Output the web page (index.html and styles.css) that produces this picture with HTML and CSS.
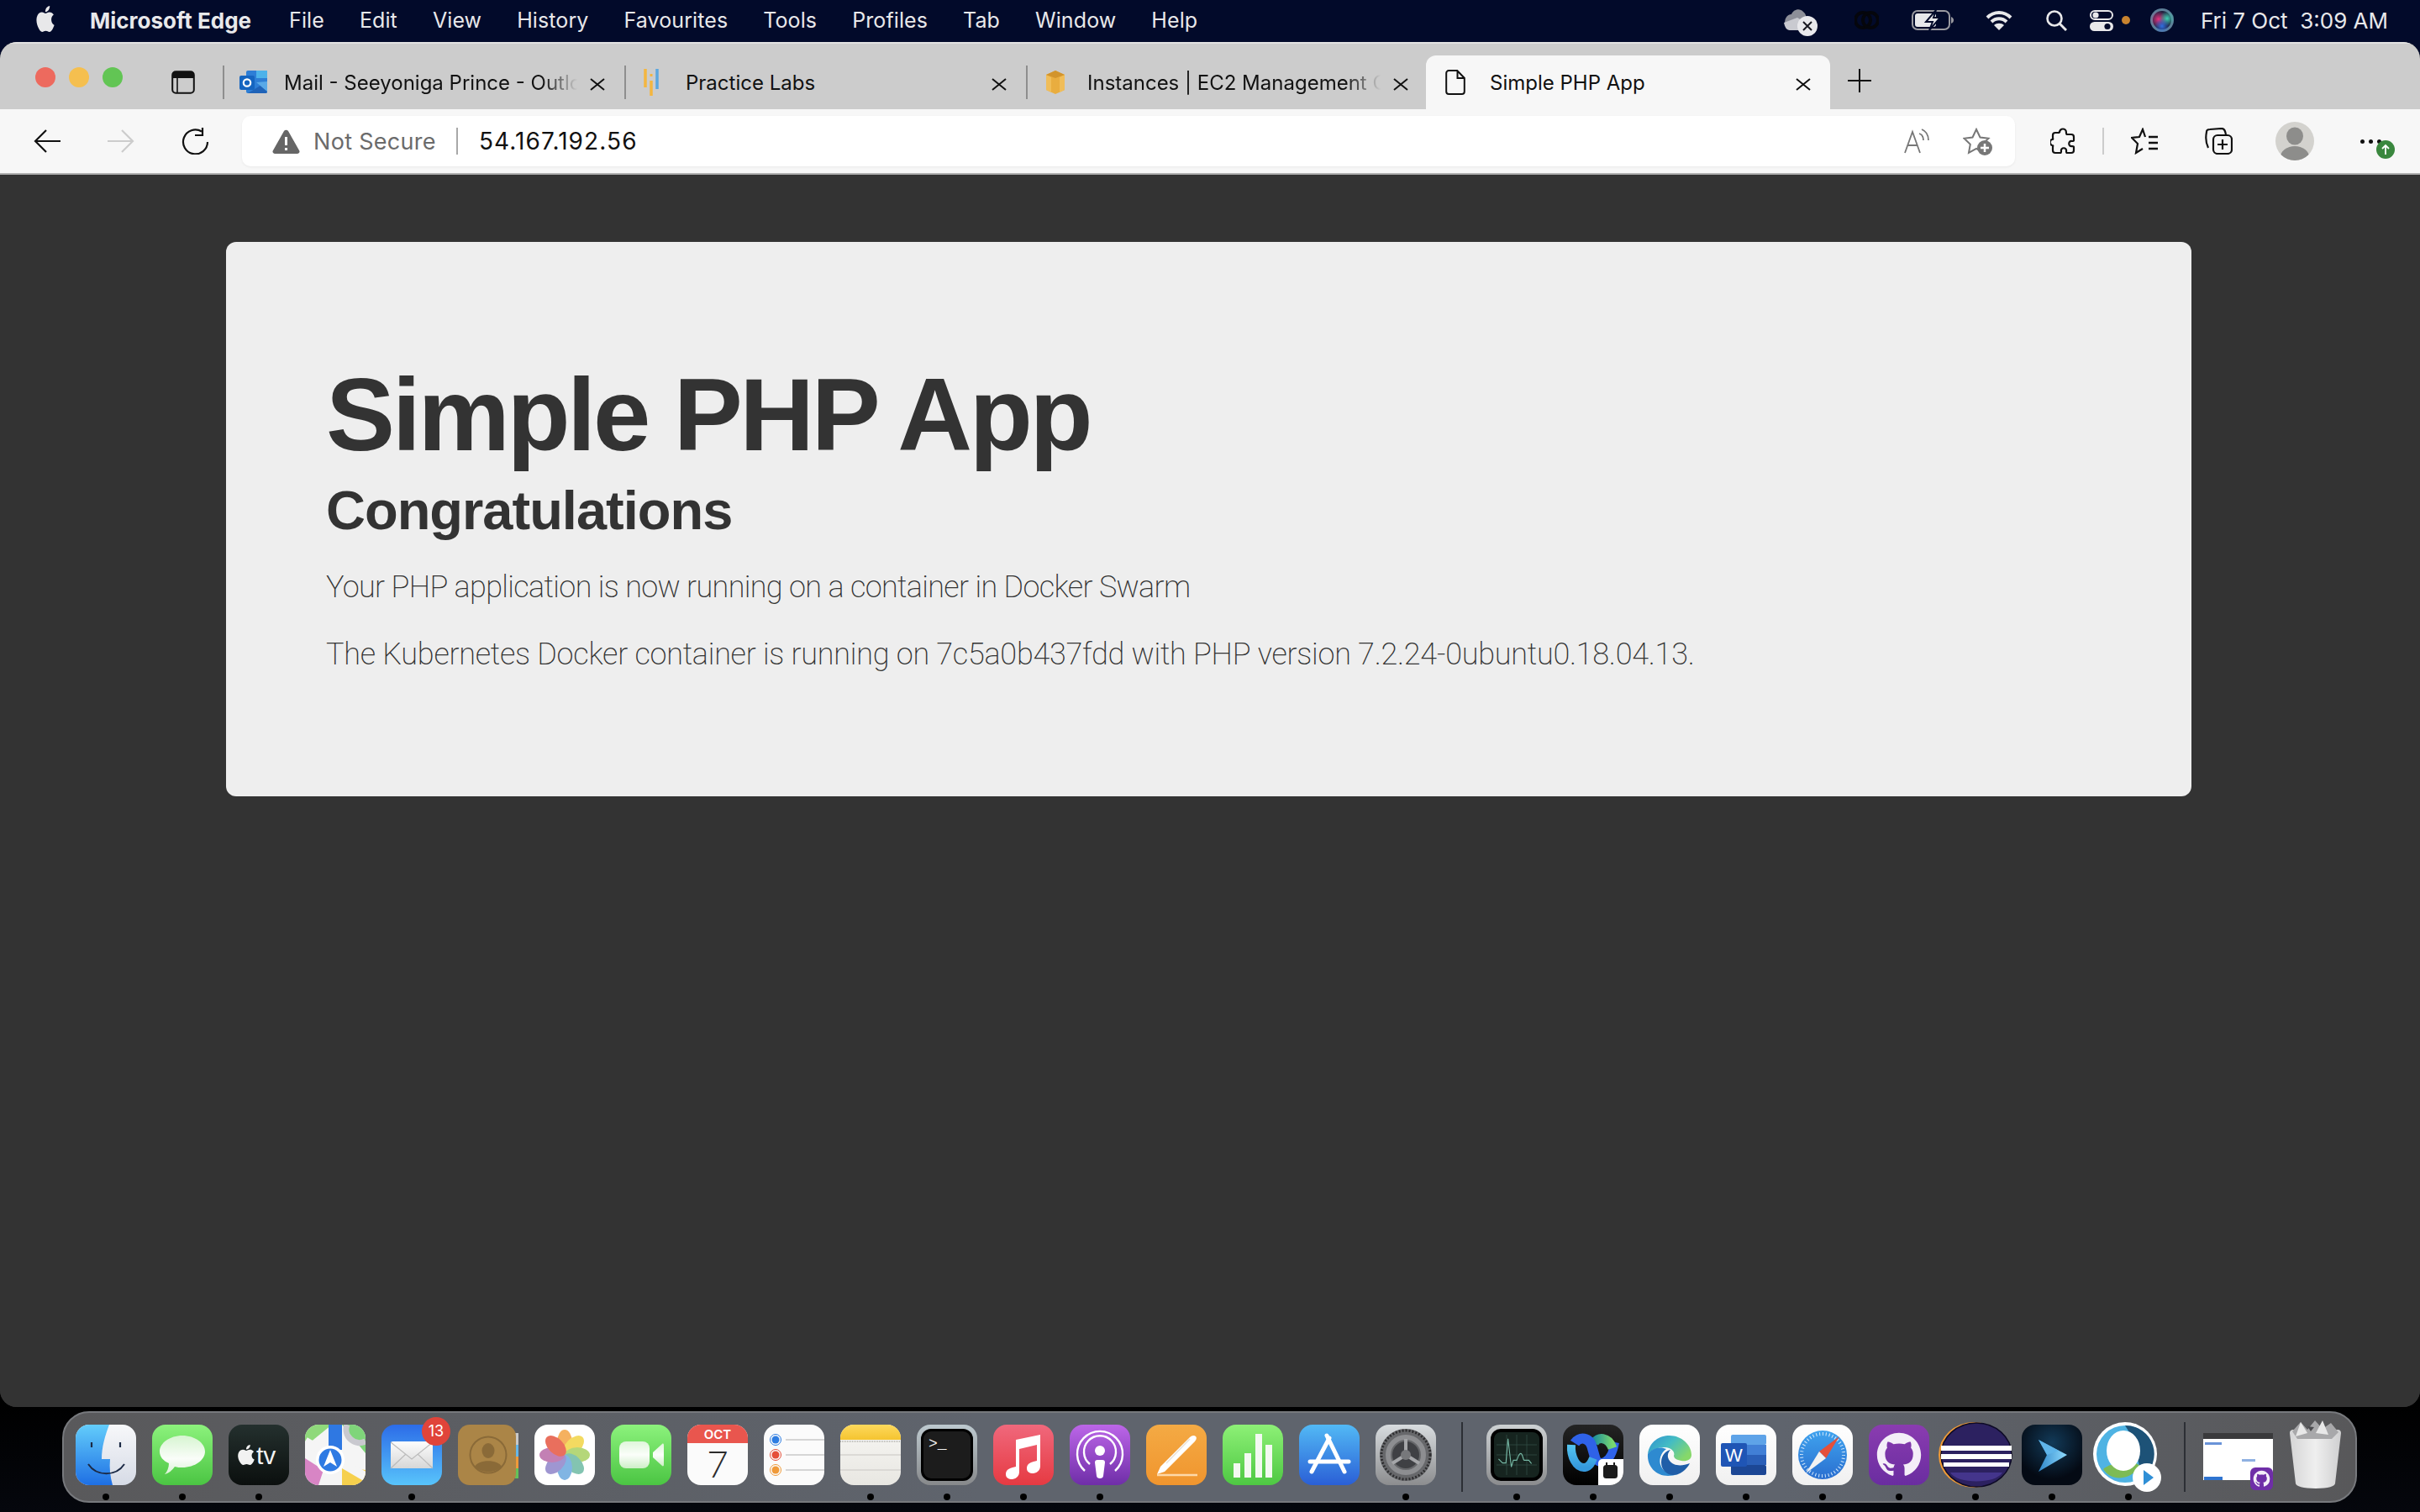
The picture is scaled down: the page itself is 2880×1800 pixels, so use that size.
FILE: index.html
```html
<!DOCTYPE html>
<html lang="en">
<head>
    <meta charset="UTF-8">
    <title>Simple PHP App</title>
    <link rel="stylesheet" href="styles.css">
</head>
<body>

    <!-- mac menu bar -->
    <div class="menubar">
        <svg class="apple" width="26" height="31" viewBox="0 0 24 24" preserveAspectRatio="none"><path fill="#e8e8ea" d="M12.152 6.896c-.948 0-2.415-1.078-3.96-1.04-2.04.027-3.91 1.183-4.961 3.014-2.117 3.675-.546 9.103 1.519 12.09 1.013 1.454 2.208 3.09 3.792 3.039 1.52-.065 2.09-.987 3.935-.987 1.831 0 2.35.987 3.96.948 1.637-.026 2.676-1.48 3.676-2.948 1.156-1.688 1.636-3.325 1.662-3.415-.039-.013-3.182-1.221-3.22-4.857-.026-3.04 2.48-4.494 2.597-4.559-1.429-2.09-3.623-2.324-4.39-2.376-2-.156-3.675 1.09-4.61 1.09zM15.53 3.83c.843-1.012 1.4-2.427 1.245-3.83-1.207.052-2.662.805-3.532 1.818-.78.896-1.454 2.338-1.273 3.714 1.338.104 2.715-.688 3.559-1.701"/></svg>
        <span class="menu-item app-name">Microsoft Edge</span>
        <span class="menu-item">File</span>
        <span class="menu-item">Edit</span>
        <span class="menu-item">View</span>
        <span class="menu-item">History</span>
        <span class="menu-item">Favourites</span>
        <span class="menu-item">Tools</span>
        <span class="menu-item">Profiles</span>
        <span class="menu-item">Tab</span>
        <span class="menu-item">Window</span>
        <span class="menu-item">Help</span>

        <div class="status">
            <svg class="st-cloud" width="41" height="34" viewBox="0 0 41 34"><path fill="#8d8f98" d="M3 22C0 14 5 8 10 8c2-6 10-8 14-3 4 3 4 8 3 12L8 27z"/><path fill="#c9cad0" d="M1 18l16-6 10 6-6 9H8C4 27 2 23 1 18z"/><circle cx="29" cy="22" r="12" fill="#e9e9ec"/><path d="M24 17l10 10M34 17L24 27" stroke="#1a1a22" stroke-width="2"/></svg>
            <svg class="st-dark" width="29" height="24" viewBox="0 0 29 24"><circle cx="10" cy="12" r="9" fill="none" stroke="#05060c" stroke-width="4"/><circle cx="19" cy="12" r="9" fill="none" stroke="#05060c" stroke-width="4"/></svg>
            <svg class="st-battery" width="51" height="24" viewBox="0 0 51 24"><rect x="1" y="1" width="44" height="22" rx="6" fill="none" stroke="#9a9aa0" stroke-width="2"/><rect x="4" y="4" width="25" height="16" rx="3" fill="#e8e8ea"/><path d="M47 8c2 1 3 2 3 4s-1 3-3 4z" fill="#9a9aa0"/><path d="M29 0L17 14h8l-4 10 13-15h-8z" fill="#e8e8ea" stroke="#020a2a" stroke-width="2"/></svg>
            <svg class="st-wifi" width="32" height="24" viewBox="0 0 32 24"><path d="M2 9c8-8 20-8 28 0M7 14c5-5 13-5 18 0M11 18" fill="none" stroke="#e8e8ea" stroke-width="4"/><path d="M16 24l-6-6c3-3 9-3 12 0z" fill="#e8e8ea"/></svg>
            <svg class="st-search" width="26" height="25" viewBox="0 0 26 25"><circle cx="11" cy="10" r="8.500" fill="none" stroke="#e8e8ea" stroke-width="2.600"/><path d="M17 16l8 8" stroke="#e8e8ea" stroke-width="3"/></svg>
            <svg class="st-control" width="28" height="25" viewBox="0 0 28 25"><rect x="1" y="1" width="26" height="10" rx="5" fill="none" stroke="#e8e8ea" stroke-width="2"/><circle cx="7" cy="6" r="3.600" fill="#e8e8ea"/><rect y="14" width="28" height="11" rx="5.500" fill="#e8e8ea"/><circle cx="21" cy="19.500" r="3.600" fill="#020a2a"/></svg>
            <span class="st-dot"></span>
            <svg class="st-siri" width="28" height="28" viewBox="0 0 28 28"><defs><radialGradient id="siriPink"><stop offset="0" stop-color="#e8337f"/><stop offset="1" stop-color="#e8337f" stop-opacity="0"/></radialGradient><radialGradient id="siriTeal"><stop offset="0" stop-color="#3fd0b4"/><stop offset="1" stop-color="#3fd0b4" stop-opacity="0"/></radialGradient><radialGradient id="siriBlue"><stop offset="0" stop-color="#2f6fe0"/><stop offset="1" stop-color="#2f6fe0" stop-opacity="0"/></radialGradient></defs><circle cx="14" cy="14" r="14" fill="#5d7f98"/><circle cx="14" cy="14" r="11" fill="#20203e"/><circle cx="10" cy="13" r="10" fill="url(#siriPink)"/><circle cx="20" cy="12" r="9" fill="url(#siriTeal)"/><circle cx="14" cy="21" r="9" fill="url(#siriBlue)"/></svg>
            <span class="clock">Fri 7 Oct&nbsp; 3:09 AM</span>
        </div>
    </div>

    <div class="window">
        <div class="tabstrip">
            <div class="lights">
                <span class="light red"></span>
                <span class="light yellow"></span>
                <span class="light green"></span>
            </div>
            <svg class="sidebar-toggle" width="28" height="28" viewBox="0 0 28 28"><rect x="1.200" y="1.200" width="25.600" height="25.600" rx="4" fill="none" stroke="#111" stroke-width="2"/><path d="M1 5a4 4 0 014-4h18a4 4 0 014 4v4H1z" fill="#111"/><path d="M7 9v18" stroke="#111" stroke-width="1.600"/></svg>

            <div class="tab">
                <span class="tab-icon">
                    <svg width="34" height="28" viewBox="0 0 34 28"><rect x="8" y="0" width="25" height="27" rx="2" fill="#2d7ed6"/><rect x="20" y="0" width="13" height="9" fill="#4cb2ea"/><path d="M10 27l23-14v12a2 2 0 01-2 2z" fill="#1f63b8"/><path d="M20 14l13-1v12z" fill="#58a9e8"/><rect x="0" y="6" width="18" height="17" rx="2" fill="#1565c0"/><circle cx="9" cy="14.500" r="4.200" fill="none" stroke="#fff" stroke-width="2.200"/></svg>
                </span>
                <span class="tab-title">Mail - Seeyoniga Prince - Outlo</span>
                <svg class="tab-close" width="20" height="15" viewBox="0 0 20 15"><path d="M2 1l16 13M18 1L2 14" stroke="#111" stroke-width="2"/></svg>
            </div>
            <div class="tab">
                <span class="tab-icon">
                    <svg width="34" height="32" viewBox="0 0 34 32"><path d="M5 0v22M12 14v18" stroke="#f4b63f" stroke-width="3.500"/><path d="M19 0v24" stroke="#5aa7e0" stroke-width="3.500"/><path d="M12 6v3" stroke="#f4b63f" stroke-width="3"/></svg>
                </span>
                <span class="tab-title plain">Practice Labs</span>
                <svg class="tab-close" width="20" height="15" viewBox="0 0 20 15"><path d="M2 1l16 13M18 1L2 14" stroke="#111" stroke-width="2"/></svg>
            </div>
            <div class="tab">
                <span class="tab-icon">
                    <svg width="34" height="28" viewBox="0 0 34 28"><path d="M4 5l11-5 11 5v18l-11 5-11-5z" fill="#e9ad3f"/><path d="M4 5l6 3v18l-6-3zM26 5l-6 3v18l6-3z" fill="#f0bd59"/><path d="M4 5l11-5 11 5-11 4z" fill="#d2942c"/></svg>
                </span>
                <span class="tab-title">Instances | EC2 Management C</span>
                <svg class="tab-close" width="20" height="15" viewBox="0 0 20 15"><path d="M2 1l16 13M18 1L2 14" stroke="#111" stroke-width="2"/></svg>
            </div>
            <div class="tab active">
                <span class="tab-icon">
                    <svg width="24" height="30" viewBox="0 0 24 30"><path d="M1.200 4a3 3 0 013-3h10l8.600 9v16a3 3 0 01-3 3H4.200a3 3 0 01-3-3zM14.500 1v9h8" fill="none" stroke="#111" stroke-width="2"/></svg>
                </span>
                <span class="tab-title plain">Simple PHP App</span>
                <svg class="tab-close" width="20" height="15" viewBox="0 0 20 15"><path d="M2 1l16 13M18 1L2 14" stroke="#111" stroke-width="2"/></svg>
            </div>
            <svg class="new-tab" width="28" height="28" viewBox="0 0 28 28"><path d="M14 0v28M0 14h28" stroke="#111" stroke-width="2"/></svg>
        </div>

        <div class="toolbar">
            <svg class="nav-btn" width="32" height="28" viewBox="0 0 32 28"><path d="M32 14H2M15 1L2 14l13 13" fill="none" stroke="#111" stroke-width="2.200"/></svg>
            <svg class="nav-btn" width="32" height="28" viewBox="0 0 32 28"><path d="M0 14h30M17 1l13 13-13 13" fill="none" stroke="#ccc" stroke-width="2.200"/></svg>
            <svg class="nav-btn" width="33" height="32" viewBox="0 0 33 32"><path d="M24 4.500A14.500 14.500 0 1031 17" fill="none" stroke="#111" stroke-width="2.200"/><path d="M25 0v9h-9" fill="none" stroke="#111" stroke-width="2.200"/></svg>

            <div class="address">
                <svg width="33" height="29" viewBox="0 0 33 29"><path d="M14 2a3 3 0 015 0l13 23a2.500 2.500 0 01-2 4H3a2.500 2.500 0 01-2-4z" fill="#666"/><path d="M16.500 9v10M16.500 22v3" stroke="#fff" stroke-width="3"/></svg>
                <span class="not-secure">Not Secure</span>
                <span class="address-sep"></span>
                <span class="url">54.167.192.56</span>
                <div class="address-actions">
                    <svg width="31" height="30" viewBox="0 0 31 30"><path d="M1 29L10 4l9 25M4 20h12" fill="none" stroke="#777" stroke-width="1.800"/><path d="M18 6c3 1 5 4 5 8M21 1c5 2 8 7 8 13" fill="none" stroke="#777" stroke-width="1.800"/></svg>
                    <svg width="35" height="33" viewBox="0 0 35 33"><path d="M16 2l4.500 9.500 10 1.300-7.300 7 1.800 10-9-5-9 5 1.800-10-7.300-7 10-1.300z" fill="none" stroke="#777" stroke-width="2"/><circle cx="26" cy="24" r="9" fill="#777"/><path d="M26 19v10M21 24h10" stroke="#fff" stroke-width="2.500"/></svg>
                </div>
            </div>

            <span class="tool-btn">
                <svg width="30" height="32" viewBox="0 0 30 32"><path d="M11 6c0-6 8-6 8 0 0 1 0 2 1 2h5c2 0 3 1 3 3v4c0 1-1 1-2 1-5-1-5 7 0 6 1 0 2 0 2 1v4c0 2-1 3-3 3h-5c-1 0-1-1-1-2 1-5-7-5-6 0 0 1 0 2-1 2H6c-2 0-3-1-3-3v-4c0-1 1-2-1-2-3-1-3-6 0-7 2 0 1-1 1-2v-3c0-2 1-3 3-3h4c1 0 1-1 1-2z" fill="none" stroke="#111" stroke-width="2.200"/></svg>
            </span>
            <span class="tool-sep"></span>
            <span class="tool-btn">
                <svg width="33" height="32" viewBox="0 0 33 32"><path d="M17 11l-3-9-4 9-9 1 7 7-2 11 8-5M9 19" fill="none" stroke="#111" stroke-width="2.200"/><path d="M21 11h11M21 18h11M21 25h11" stroke="#111" stroke-width="2.400"/></svg>
            </span>
            <span class="tool-btn">
                <svg width="33" height="32" viewBox="0 0 33 32"><path d="M4 24C1 18 1 10 2 5c0-2 2-3 4-3l14-1c3 0 4 2 5 7" fill="none" stroke="#111" stroke-width="2.200"/><rect x="10" y="9" width="22" height="22" rx="5" fill="#f7f7f7" stroke="#111" stroke-width="2.200"/><path d="M21 14v12M15 20h12" stroke="#111" stroke-width="2.200"/></svg>
            </span>
            <span class="tool-btn avatar-btn">
                <svg width="46" height="46" viewBox="0 0 46 46"><defs><clipPath id="avatarClip"><circle cx="23" cy="23" r="23"/></clipPath></defs><circle cx="23" cy="23" r="23" fill="#d3d2ce"/><g clip-path="url(#avatarClip)" fill="#8d8d8b"><ellipse cx="23" cy="17" rx="10" ry="10.500"/><ellipse cx="23" cy="42" rx="17" ry="13"/></g></svg>
            </span>
            <span class="more-btn">
                <span class="more-dots"></span>
                <svg class="update-badge" width="22" height="22" viewBox="0 0 22 22"><circle cx="11" cy="11" r="11" fill="#3a873e"/><path d="M11 17V6M7 10l4-4 4 4" fill="none" stroke="#fff" stroke-width="1.800"/></svg>
            </span>
        </div>

        <div class="page">
            <div class="jumbotron">
                <h1>Simple PHP App</h1>
                <h2>Congratulations</h2>
                <p class="lead-one">Your PHP application is now running on a container in Docker Swarm</p>
                <p class="lead-two">The Kubernetes Docker container is running on 7c5a0b437fdd with PHP version 7.2.24-0ubuntu0.18.04.13.</p>
            </div>
        </div>
    </div>

    <!-- dock -->
    <div class="dock">
        <div class="dock-item run"><div class="app-icon finder">
            <svg viewBox="0 0 72 72"><defs><linearGradient id="finderG" x1="0" y1="0" x2="0" y2="1"><stop offset="0" stop-color="#63cdfb"/><stop offset="1" stop-color="#1e6fe4"/></linearGradient></defs><path d="M0 0h40c-5 13-9 27-9 41h10c-1 10 0 21 3 31H0z" fill="url(#finderG)"/><path d="M19 21v6M53 21v6" stroke="#1c2a45" stroke-width="2.200"/><path d="M15 47c10 15 33 15 43 0" fill="none" stroke="#1c2a45" stroke-width="2"/></svg>
        </div></div>
        <div class="dock-item run"><div class="app-icon messages">
            <svg viewBox="0 0 72 72"><defs><linearGradient id="msgG" x1="0" y1="0" x2="0" y2="1"><stop offset="0" stop-color="#d6f5d0"/><stop offset=".6" stop-color="#fafdf9"/><stop offset="1" stop-color="#d9f3d4"/></linearGradient></defs><path d="M36 13c15 0 27 9 27 19s-12 19-27 19c-3 0-6 0-9-1-3 4-7 8-12 9 3-3 5-8 5-13-7-3-11-8-11-14 0-10 12-19 27-19z" fill="url(#msgG)"/></svg>
        </div></div>
        <div class="dock-item run"><div class="app-icon appletv">
            <svg viewBox="0 0 72 72"><g transform="translate(9 24)"><path fill="#f2f2f2" d="M12.152 6.896c-.948 0-2.415-1.078-3.96-1.04-2.04.027-3.91 1.183-4.961 3.014-2.117 3.675-.546 9.103 1.519 12.09 1.013 1.454 2.208 3.09 3.792 3.039 1.52-.065 2.09-.987 3.935-.987 1.831 0 2.35.987 3.96.948 1.637-.026 2.676-1.48 3.676-2.948 1.156-1.688 1.636-3.325 1.662-3.415-.039-.013-3.182-1.221-3.22-4.857-.026-3.04 2.48-4.494 2.597-4.559-1.429-2.09-3.623-2.324-4.39-2.376-2-.156-3.675 1.09-4.61 1.09zM15.53 3.83c.843-1.012 1.4-2.427 1.245-3.83-1.207.052-2.662.805-3.532 1.818-.78.896-1.454 2.338-1.273 3.714 1.338.104 2.715-.688 3.559-1.701"/></g><text x="33" y="47" class="tv-text">tv</text></svg>
        </div></div>
        <div class="dock-item"><div class="app-icon maps">
            <svg viewBox="0 0 72 72"><path d="M0 0h32L0 26z" fill="#8fd97b"/><path d="M44 0h28v34z" fill="#7fd57a"/><path d="M50 0a16 16 0 0022 20" fill="none" stroke="#c9c9cf" stroke-width="7"/><path d="M0 40l22 14-6 18H0z" fill="#d885c5"/><path d="M44 50l28 4v18H38z" fill="#f6d04d"/><path d="M0 20l72 42" stroke="#f5f5f5" stroke-width="11"/><path d="M28 0h16v30H28z" fill="#2f78e2"/><path d="M28 52h16v20H28z" fill="#f5f5f5"/><circle cx="30" cy="42" r="17" fill="#fff"/><circle cx="30" cy="42" r="13.500" fill="#2e7ae3"/><path d="M30 30l8 20-8-5-8 5z" fill="#fff"/></svg>
        </div></div>
        <div class="dock-item run"><div class="app-icon mail">
            <svg viewBox="0 0 72 72"><defs><linearGradient id="mailG" x1="0" y1="0" x2="0" y2="1"><stop offset="0" stop-color="#fdfdfd"/><stop offset="1" stop-color="#d7d7d7"/></linearGradient></defs><rect x="11" y="20" width="50" height="32" rx="2.500" fill="url(#mailG)"/><path d="M11 21l25 20 25-20M11 52l18-17M61 52L43 35" fill="none" stroke="#bbb" stroke-width="1.200"/></svg>
            <span class="badge">13</span>
        </div></div>
        <div class="dock-item"><div class="app-icon contacts">
            <svg viewBox="0 0 72 72"><rect x="68" y="10" width="6" height="14" fill="#c9c9c9"/><rect x="68" y="24" width="6" height="14" fill="#65b7e8"/><rect x="68" y="38" width="6" height="14" fill="#ef9a3a"/><rect x="68" y="52" width="6" height="12" fill="#63c25a"/><rect x="0" y="0" width="69" height="72" rx="14" fill="#ab8547"/><circle cx="36" cy="36" r="21.500" fill="none" stroke="#8a6a38" stroke-width="2"/><ellipse cx="36" cy="31" rx="7.500" ry="9" fill="#8a6a38"/><path d="M20 50c4-9 28-9 32 0-8 8-24 8-32 0z" fill="#8a6a38"/></svg>
        </div></div>
        <div class="dock-item"><div class="app-icon photos">
            <svg viewBox="0 0 72 72"><g opacity=".82"><ellipse cx="36" cy="21" rx="9" ry="15" fill="#f4a13c"/><ellipse cx="36" cy="21" rx="9" ry="15" fill="#f1d33f" transform="rotate(45 36 36)"/><ellipse cx="36" cy="21" rx="9" ry="15" fill="#a5cf5c" transform="rotate(90 36 36)"/><ellipse cx="36" cy="21" rx="9" ry="15" fill="#68b8a0" transform="rotate(135 36 36)"/><ellipse cx="36" cy="21" rx="9" ry="15" fill="#66a6dd" transform="rotate(180 36 36)"/><ellipse cx="36" cy="21" rx="9" ry="15" fill="#8a80c8" transform="rotate(225 36 36)"/><ellipse cx="36" cy="21" rx="9" ry="15" fill="#b765a4" transform="rotate(270 36 36)"/><ellipse cx="36" cy="21" rx="9" ry="15" fill="#e5503a" transform="rotate(315 36 36)"/></g></svg>
        </div></div>
        <div class="dock-item"><div class="app-icon facetime">
            <svg viewBox="0 0 72 72"><defs><linearGradient id="ftG" x1="0" y1="0" x2="0" y2="1"><stop offset="0" stop-color="#dff6da"/><stop offset=".5" stop-color="#fbfefa"/><stop offset="1" stop-color="#cdeec7"/></linearGradient></defs><rect x="10" y="20" width="36" height="32" rx="8" fill="url(#ftG)"/><path d="M50 33l11-10c1-1 2 0 2 1v24c0 1-1 2-2 1L50 39z" fill="url(#ftG)"/></svg>
        </div></div>
        <div class="dock-item"><div class="app-icon calendar">
            <div class="cal-head">OCT</div>
            <div class="cal-day">7</div>
        </div></div>
        <div class="dock-item"><div class="app-icon reminders">
            <svg viewBox="0 0 72 72"><circle cx="14" cy="18" r="6.500" fill="none" stroke="#2f7de1"/><circle cx="14" cy="18" r="4.500" fill="#2f7de1"/><circle cx="14" cy="36" r="6.500" fill="none" stroke="#e5503a"/><circle cx="14" cy="36" r="4.500" fill="#e5503a"/><circle cx="14" cy="54" r="6.500" fill="none" stroke="#ef9a3a"/><circle cx="14" cy="54" r="4.500" fill="#ef9a3a"/><path d="M26 18h46M26 36h46M26 54h46" stroke="#c9c9c9" stroke-width="1.400"/></svg>
        </div></div>
        <div class="dock-item run"><div class="app-icon notes">
            <svg viewBox="0 0 72 72"><defs><linearGradient id="notesG" x1="0" y1="0" x2="0" y2="1"><stop offset="0" stop-color="#fdd95c"/><stop offset="1" stop-color="#f5c430"/></linearGradient></defs><rect width="72" height="18" fill="url(#notesG)"/><path d="M0 20h72" stroke="#bdbdb8" stroke-width="2" stroke-dasharray="1 1"/><path d="M0 36h72M0 54h72" stroke="#d5d4cf" stroke-width="1.400"/></svg>
        </div></div>
        <div class="dock-item run"><div class="app-icon terminal">
            <div class="term-screen">&gt;_</div>
        </div></div>
        <div class="dock-item run"><div class="app-icon music">
            <svg viewBox="0 0 72 72"><path d="M27 18l29-6v37c0 5-3 8-8 9-5 0-8-2-8-6 0-5 4-7 8-8l4-1V24l-21 5v27c0 5-3 8-8 9-5 0-8-2-8-6 0-5 4-7 8-8l4-1z" fill="#fff"/></svg>
        </div></div>
        <div class="dock-item run"><div class="app-icon podcasts">
            <svg viewBox="0 0 72 72"><g fill="none" stroke="#fff" stroke-width="2.400"><path d="M18 55a27 27 0 1136 0"/><path d="M24 47a19 19 0 1124 0"/></g><circle cx="36" cy="31" r="6" fill="#fff"/><path d="M33 42h6c2 0 3 1 3 3l-2 16c0 2-2 3-4 3s-4-1-4-3l-2-16c0-2 1-3 3-3z" fill="#fff"/></svg>
        </div></div>
        <div class="dock-item"><div class="app-icon pages">
            <svg viewBox="0 0 72 72"><path d="M13 59l4-9 35-35c2-2 5-3 7-1s0 5-2 7L22 56z" fill="#fff"/><path d="M24 46l28-29" stroke="#e9e3da" stroke-width="1.600"/><path d="M13 60h48" stroke="#fdd8a8" stroke-width="2.500"/></svg>
        </div></div>
        <div class="dock-item"><div class="app-icon numbers">
            <svg viewBox="0 0 72 72"><g fill="#f3f9f1"><rect x="13" y="46" width="8" height="17"/><rect x="26" y="34" width="8" height="29"/><rect x="39" y="11" width="8" height="52"/><rect x="51" y="24" width="8" height="39"/></g></svg>
        </div></div>
        <div class="dock-item"><div class="app-icon appstore">
            <svg viewBox="0 0 72 72"><g fill="none" stroke="#fff" stroke-width="5" stroke-linecap="round"><path d="M15 56l21-40"/><path d="M33 13l21 43"/><path d="M13 44h46"/></g></svg>
        </div></div>
        <div class="dock-item run"><div class="app-icon settings">
            <svg viewBox="0 0 72 72"><circle cx="36" cy="36" r="31" fill="#67686b"/><circle cx="36" cy="36" r="29" fill="none" stroke="#2d2d2f" stroke-width="3" stroke-dasharray="2 2"/><circle cx="36" cy="36" r="21" fill="none" stroke="#8d8e91" stroke-width="6"/><circle cx="36" cy="36" r="16" fill="#3f4044"/><g stroke="#a5a6a9" stroke-width="4"><path d="M36 36V17"/><path d="M36 36l16 10"/><path d="M36 36l-16 10"/></g><circle cx="36" cy="36" r="6" fill="#77787b"/></svg>
        </div></div>

        <span class="dock-divider"></span>

        <div class="dock-item run"><div class="app-icon activity">
            <div class="activity-screen">
                <svg viewBox="0 0 60 60"><path d="M0 15h60M0 30h60M0 45h60M15 0v60M30 0v60M45 0v60" stroke="#35574d" stroke-width=".8"/><path d="M3 36l6 6h5l3-36 5 42 3-10h5c2-4 3-10 6-10s3 8 5 10h7l4 5" fill="none" stroke="#76b9a5" stroke-width="1.400"/></svg>
            </div>
        </div></div>
        <div class="dock-item run"><div class="app-icon webex">
            <svg viewBox="0 0 72 72"><defs><linearGradient id="wbLight" x1="0" y1="0" x2="0" y2="1"><stop offset="0" stop-color="#55c6f0"/><stop offset="1" stop-color="#3599dd"/></linearGradient><linearGradient id="wbGreen" x1="0" y1="0" x2="1" y2="0"><stop offset="0" stop-color="#1f8f9a"/><stop offset="1" stop-color="#78d86f"/></linearGradient></defs><path d="M39 41c4 7 18 7 23-20" fill="none" stroke="#2f62e8" stroke-width="10"/><path d="M37 22c4-8 17-8 22 6" fill="none" stroke="url(#wbGreen)" stroke-width="11"/><path d="M14 22c5-8 18-8 21 6l4 14" fill="none" stroke="#2f62e8" stroke-width="12"/><path d="M10 24c-1 14 6 28 16 27 6-1 8-6 10-11" fill="none" stroke="url(#wbLight)" stroke-width="10"/><path d="M42 46a5 5 0 015-5h25v31H42z" fill="#fff"/><rect x="48" y="48" width="17" height="16" rx="3.500" fill="#1c1c1c"/><path d="M52 45v4M61 45v4" stroke="#1c1c1c" stroke-width="2"/></svg>
        </div></div>
        <div class="dock-item run"><div class="app-icon edge">
            <svg viewBox="0 0 72 72"><defs><linearGradient id="edgeG" x1="0" y1="0" x2="1" y2=".6"><stop offset="0" stop-color="#2f8fd0"/><stop offset=".5" stop-color="#43bcc4"/><stop offset="1" stop-color="#86d86a"/></linearGradient></defs><path d="M10 35C12 20 24 13 36 13c14 0 26 11 26 23 0 6-6 8-12 7-6-1-9-3-9-6 2-4-3-10-11-10-8 0-16 3-20 8z" fill="url(#edgeG)"/><path d="M10 35c4-6 14-10 22-6-6 4-10 13-6 21 3 6 10 10 20 9-4 1-8 2-12 2C20 61 9 50 10 35z" fill="#2e8ad0"/><path d="M26 45c0-9 6-14 11-15-4 4-4 9-1 13 4 6 14 7 24 3-4 8-12 14-20 14-8 0-14-7-14-15z" fill="#1f5ea8"/></svg>
        </div></div>
        <div class="dock-item run"><div class="app-icon word">
            <svg viewBox="0 0 72 72"><rect x="18" y="12" width="42" height="12" rx="2" fill="#5ea3e8"/><rect x="18" y="24" width="42" height="12" fill="#417fd6"/><rect x="18" y="36" width="42" height="12" fill="#2a5fb8"/><rect x="18" y="48" width="42" height="12" rx="2" fill="#1c4795"/><rect x="6" y="22" width="31" height="28" rx="2" fill="#1f55b5"/><text x="21.500" y="44" class="word-text">W</text></svg>
        </div></div>
        <div class="dock-item run"><div class="app-icon safari">
            <svg viewBox="0 0 72 72"><defs><linearGradient id="safariG" x1="0" y1="0" x2="0" y2="1"><stop offset="0" stop-color="#3fa3ee"/><stop offset="1" stop-color="#2a6fd0"/></linearGradient></defs><circle cx="36" cy="36" r="29" fill="url(#safariG)"/><circle cx="36" cy="36" r="25" fill="none" stroke="#d4e8fa" stroke-width="4" stroke-dasharray="1 2.900"/><path d="M56 14L32 32l8 8z" fill="#e5503a"/><path d="M16 58l24-18-8-8z" fill="#f2f2f2"/></svg>
        </div></div>
        <div class="dock-item run"><div class="app-icon github">
            <svg viewBox="-3 -3 22 22"><path fill="#f4eef8" d="M8 0C3.58 0 0 3.58 0 8c0 3.54 2.29 6.53 5.47 7.59.4.07.55-.17.55-.38 0-.19-.01-.82-.01-1.49-2.01.37-2.53-.49-2.69-.94-.09-.23-.48-.94-.82-1.13-.28-.15-.68-.52-.01-.53.63-.01 1.08.58 1.23.82.72 1.21 1.87.87 2.33.66.07-.52.28-.87.51-1.07-1.78-.2-3.64-.89-3.64-3.95 0-.87.31-1.59.82-2.15-.08-.2-.36-1.02.08-2.12 0 0 .67-.21 2.2.82.64-.18 1.32-.27 2-.27.68 0 1.36.09 2 .27 1.53-1.04 2.2-.82 2.2-.82.44 1.1.16 1.92.08 2.12.51.56.82 1.27.82 2.15 0 3.07-1.87 3.75-3.65 3.95.29.25.54.73.54 1.48 0 1.07-.01 1.93-.01 2.2 0 .21.15.46.55.38A8.013 8.013 0 0016 8c0-4.42-3.58-8-8-8z"/></svg>
        </div></div>
        <div class="dock-item run"><div class="app-icon eclipse">
            <svg viewBox="0 0 88 78"><ellipse cx="42" cy="39" rx="42" ry="39" fill="#f09a36"/><ellipse cx="45" cy="39" rx="42" ry="38" fill="#2c2160" stroke="#0d0a26" stroke-width="1.500"/><path d="M14 60c8 14 54 14 62 0z" fill="#44358c"/><rect x="3" y="28" width="84" height="6" fill="#fff"/><rect x="3" y="38" width="84" height="6" fill="#fff"/><rect x="6" y="48" width="78" height="5" fill="#fff"/></svg>
        </div></div>
        <div class="dock-item run"><div class="app-icon prompt">
            <svg viewBox="0 0 72 72"><defs><linearGradient id="promptG" x1="0" y1="0" x2="1" y2="0"><stop offset="0" stop-color="#2f86c8"/><stop offset="1" stop-color="#8fdcff"/></linearGradient></defs><path d="M20 18l34 18-34 20 10-20z" fill="url(#promptG)"/><path d="M20 18l24 13-14 5z" fill="#5fb5ea"/></svg>
        </div></div>
        <div class="dock-item run"><div class="app-icon webex-meet">
            <svg viewBox="0 0 82 84"><ellipse cx="38" cy="38" rx="38" ry="38" fill="#fff"/><ellipse cx="38" cy="38" rx="34" ry="34" fill="#4fb3e3"/><path d="M38 4a34 34 0 0120 62L48 20z" fill="#1d5277"/><path d="M12 56c8-8 34-12 44-4-8 14-32 22-44 4z" fill="#7dbb54"/><ellipse cx="36" cy="34" rx="20" ry="24" fill="#fff"/><circle cx="64" cy="66" r="17" fill="#fff"/><path d="M60 57l12 9-12 9z" fill="#2f8fd6"/></svg>
        </div></div>

        <span class="dock-divider thumb-divider"></span>

        <div class="dock-item thumb-item">
            <div class="thumb">
                <div class="thumb-bar"></div>
                <div class="thumb-note"></div>
                <div class="thumb-btn"></div>
            </div>
            <svg class="thumb-app" viewBox="-3 -3 22 22"><path fill="#f4eef8" d="M8 0C3.58 0 0 3.58 0 8c0 3.54 2.29 6.53 5.47 7.59.4.07.55-.17.55-.38 0-.19-.01-.82-.01-1.49-2.01.37-2.53-.49-2.69-.94-.09-.23-.48-.94-.82-1.13-.28-.15-.68-.52-.01-.53.63-.01 1.08.58 1.23.82.72 1.21 1.87.87 2.33.66.07-.52.28-.87.51-1.07-1.78-.2-3.64-.89-3.64-3.95 0-.87.31-1.59.82-2.15-.08-.2-.36-1.02.08-2.12 0 0 .67-.21 2.2.82.64-.18 1.32-.27 2-.27.68 0 1.36.09 2 .27 1.53-1.04 2.2-.82 2.2-.82.44 1.1.16 1.92.08 2.12.51.56.82 1.27.82 2.15 0 3.07-1.87 3.75-3.65 3.95.29.25.54.73.54 1.48 0 1.07-.01 1.93-.01 2.2 0 .21.15.46.55.38A8.013 8.013 0 0016 8c0-4.42-3.58-8-8-8z"/></svg>
        </div>
        <div class="dock-item trash-item">
            <svg viewBox="0 0 63 82"><defs><linearGradient id="trashG" x1="0" y1="0" x2="1" y2="0"><stop offset="0" stop-color="#d5d5d6"/><stop offset=".5" stop-color="#efefef"/><stop offset="1" stop-color="#cfcfd0"/></linearGradient></defs><path d="M1 16c0-3 2-4 4-4h53c3 0 4 2 4 4l-7 60c0 3-8 6-23 6s-24-3-24-6z" fill="url(#trashG)"/><path d="M4 14L14 3l8 9 9-11 9 10 10-7 9 11-8 8H10z" fill="#a8a8aa"/><path d="M14 3l8 13-14 4zM40 1l-8 15 15 2z" fill="#e8e8e8"/><path d="M22 8l4 6 4-5z" fill="#4b4b4f"/></svg>
        </div>
    </div>

</body>
</html>
```

FILE: styles.css
```css
* {
    box-sizing: border-box;
}
html, body {
    height: 100%;
}
body {
    margin: 0;
    width: 2880px;
    height: 1800px;
    overflow: hidden;
    display: flex;
    flex-direction: column;
    font-family: Inter, "Liberation Sans", sans-serif;
    background: linear-gradient(#020a2a 0, #020a2a 90px, #000 1670px, #05070d 1800px);
}

/* menu bar */
.menubar {
    height: 50px;
    flex: none;
    display: flex;
    align-items: center;
    padding: 0 0 2px 41px;
    color: #e8e8ea;
    font-size: 25px;
}
.apple {
    margin-right: 40px;
    margin-top: -4px;
}
.menu-item {
    margin-right: 42px;
    letter-spacing: 0.1px;
}
.app-name {
    margin-right: 45px;
    font-size: 26px;
    font-weight: 700;
    letter-spacing: 0;
}
.status {
    margin-left: auto;
    display: flex;
    align-items: center;
    padding-right: 38px;
}
.st-cloud {
    margin-top: 4px;
}
.st-dark {
    margin-left: 44px;
}
.st-battery {
    margin-left: 39px;
}
.st-wifi {
    margin-left: 37px;
}
.st-search {
    margin-left: 39px;
}
.st-control {
    margin-left: 27px;
}
.st-dot {
    width: 10px;
    height: 10px;
    margin-left: 10px;
    border-radius: 50%;
    background: #c8832f;
}
.st-siri {
    margin-left: 24px;
}
.clock {
    margin-left: 32px;
    font-size: 26px;
}

/* browser window */
.window {
    flex: none;
    height: 1625px;
    display: flex;
    flex-direction: column;
    border-radius: 20px;
    overflow: hidden;
    background: #333;
}
.tabstrip {
    height: 80px;
    flex: none;
    display: flex;
    align-items: flex-end;
    padding-left: 42px;
    background: #ccc;
    border-top: 2px solid #e2e2e2;
    font-size: 24px;
    color: #111;
}
.lights {
    display: flex;
    gap: 16px;
    align-self: center;
    margin-top: 2px;
}
.light {
    width: 24px;
    height: 24px;
    border-radius: 50%;
}
.red {
    background: #ed6a5e;
}
.yellow {
    background: #f5bf4f;
}
.green {
    background: #62c554;
}
.sidebar-toggle {
    margin: 0 33px 18px 58px;
}
.tab {
    width: 478px;
    height: 64px;
    flex: none;
    display: flex;
    align-items: center;
    padding: 0 22px 0 20px;
    position: relative;
}
.tab::before {
    content: "";
    position: absolute;
    left: 0;
    top: 12px;
    width: 2px;
    height: 40px;
    background: #8e8e8e;
}
.tab-icon {
    width: 34px;
    margin-right: 19px;
    display: flex;
}
.tab-title {
    flex: 1;
    min-width: 0;
    white-space: nowrap;
    -webkit-mask-image: linear-gradient(to right, #000 88%, transparent 100%);
    mask-image: linear-gradient(to right, #000 88%, transparent 100%);
    margin-right: 14px;
}
.tab-title.plain {
    -webkit-mask-image: none;
    mask-image: none;
}
.tab-close {
    flex: none;
    margin-top: 4px;
}
.tab.active {
    width: 481px;
    padding-left: 23px;
    margin-left: -2px;
    background: #f7f7f7;
    border-radius: 12px 12px 0 0;
}
.tab.active::before {
    display: none;
}
.new-tab {
    margin: 0 0 20px 21px;
}

.toolbar {
    height: 78px;
    flex: none;
    display: flex;
    align-items: center;
    padding-left: 40px;
    background: #f7f7f7;
    border-bottom: 2px solid #b0b0b0;
}
.nav-btn {
    margin-right: 56px;
    flex: none;
}
.nav-btn:nth-child(3) {
    margin-right: 39px;
}
.address {
    width: 2110px;
    height: 60px;
    flex: none;
    display: flex;
    align-items: center;
    padding: 0 27px 0 36px;
    background: #fff;
    border-radius: 10px;
    box-shadow: 0 1px 3px rgba(0,0,0,0.06);
    font-size: 27px;
}
.not-secure {
    margin-left: 16px;
    color: #6b6b6b;
    letter-spacing: 0.3px;
}
.address-sep {
    width: 2px;
    height: 32px;
    margin: 0 25px 0 24px;
    background: #a8a8a8;
}
.url {
    color: #111;
    font-size: 28px;
    letter-spacing: 1.1px;
}
.address-actions {
    margin-left: auto;
    display: flex;
    align-items: center;
    gap: 39px;
}
.tool-btn {
    width: 88px;
    flex: none;
    display: flex;
    justify-content: center;
}
.tool-btn:first-of-type {
    margin-left: 13px;
}
.tool-sep {
    width: 2px;
    height: 32px;
    margin: 0 4px 0 3px;
    background: #ccc;
}
.avatar-btn {
    margin-left: 3px;
}
.more-btn {
    width: 48px;
    height: 46px;
    margin-left: 28px;
    position: relative;
}
.more-dots {
    position: absolute;
    left: 6px;
    top: 21px;
    width: 5px;
    height: 5px;
    border-radius: 50%;
    background: #111;
    box-shadow: 10px 0 0 #111, 20px 0 0 #111;
}
.update-badge {
    position: absolute;
    left: 25px;
    top: 22px;
}

/* page content */
.page {
    flex: 1;
    padding: 80px 272px 0 269px;
    background: #333;
}
.jumbotron {
    padding: 0 119px 144px;
    background: #eee;
    border-radius: 12px;
    color: #333;
    font-family: "Liberation Sans", Arial, sans-serif;
}
.jumbotron h1 {
    margin: 0;
    padding-top: 137px;
    font-size: 123px;
    font-weight: 700;
    line-height: 138px;
    letter-spacing: -3.4px;
}
.jumbotron h2 {
    margin: 12px 0 0;
    font-size: 65px;
    font-weight: 700;
    line-height: 66px;
    letter-spacing: -1px;
}
.jumbotron p {
    margin: 30px 0 0;
    font-family: Roboto, "Liberation Sans", sans-serif;
    font-size: 36px;
    font-weight: 200;
    line-height: 50px;
}
.jumbotron .lead-one {
    margin-top: 33px;
    letter-spacing: -0.66px;
}
.jumbotron .lead-two {
    letter-spacing: -0.26px;
}

/* dock */
.dock {
    width: 2731px;
    height: 109px;
    flex: none;
    margin: 5px 0 0 74px;
    display: flex;
    padding: 16px 0 0 16px;
    background: linear-gradient(to right, #59595b, #5f646d 40%, #5f646d 75%, #58585a);
    border: 2px solid #77797d;
    border-radius: 32px;
}
.dock-item {
    width: 72px;
    height: 72px;
    flex: none;
    margin-right: 19px;
    margin-top: -2px;
    position: relative;
}
.dock-item:first-child {
    margin-left: -2px;
}
.dock-item.run::after {
    content: "";
    position: absolute;
    left: 32px;
    top: 82px;
    width: 8px;
    height: 8px;
    border-radius: 50%;
    background: #000;
}
.dock-divider {
    width: 2px;
    height: 83px;
    margin: -5px 28px 0 11px;
    background: #2c2f35;
}
.thumb-divider {
    margin-right: 21px;
}
.app-icon {
    position: relative;
    width: 72px;
    height: 72px;
    border-radius: 16px;
}
.app-icon > svg {
    display: block;
    width: 100%;
    height: 100%;
}
.finder {
    background: linear-gradient(#f7f8fa, #d6dbe6);
    overflow: hidden;
}
.messages {
    background: linear-gradient(#8cf27c, #4bc543);
}
.appletv {
    background: linear-gradient(#24302e, #0b0f0e);
}
.tv-text {
    font-family: "Liberation Sans", sans-serif;
    font-size: 30px;
    fill: #f2f2f2;
}
.maps {
    background: #f5f5f5;
    overflow: hidden;
}
.mail {
    background: linear-gradient(#2c6ce8, #58c4fb);
}
.badge {
    position: absolute;
    left: 48px;
    top: -9px;
    width: 34px;
    height: 34px;
    border-radius: 50%;
    background: #e0443a;
    color: #fff;
    font-size: 18px;
    line-height: 34px;
    text-align: center;
}
.photos {
    background: #fff;
}
.facetime {
    background: linear-gradient(#8cf27c, #4bc543);
}
.calendar {
    background: #fbfbfb;
    text-align: center;
}
.cal-head {
    height: 22px;
    background: #e9564e;
    border-radius: 16px 16px 0 0;
    color: #fff;
    font-size: 15px;
    font-weight: 600;
    line-height: 24px;
}
.cal-day {
    color: #2c2c2c;
    font-family: Lato, sans-serif;
    font-size: 44px;
    font-weight: 300;
    line-height: 48px;
}
.reminders {
    background: #fbfbfb;
    overflow: hidden;
}
.notes {
    background: linear-gradient(#f7f6f3, #e8e7e2);
    overflow: hidden;
}
.terminal {
    padding: 5px;
    background: linear-gradient(#bdc9cf, #87898b);
}
.term-screen {
    height: 100%;
    padding: 4px 6px;
    background: #1c1c1c;
    border: 3px solid #000;
    border-radius: 12px;
    color: #f2f2f2;
    font-family: "Liberation Mono", monospace;
    font-size: 18px;
    line-height: 22px;
}
.music {
    background: linear-gradient(#f0687c, #e63a42);
}
.podcasts {
    background: linear-gradient(#bc66e8, #6f2ea8);
}
.pages {
    background: linear-gradient(#f4aa44, #f0952e);
}
.numbers {
    background: linear-gradient(#8df076, #4ec843);
}
.appstore {
    background: linear-gradient(#52b9f5, #2a5fd6);
}
.settings {
    background: linear-gradient(#d8dcdf, #8c8d8f);
}
.activity {
    padding: 5px;
    background: linear-gradient(#cdd1d3, #8b8c8e);
}
.activity-screen {
    height: 100%;
    padding: 3px;
    background: #16241f;
    border: 4px solid #000;
    border-radius: 12px;
    overflow: hidden;
}
.activity-screen svg {
    display: block;
    width: 100%;
    height: 100%;
}
.webex {
    background: linear-gradient(#242424, #000);
    overflow: hidden;
}
.edge, .word, .safari {
    background: linear-gradient(#fff, #f0f0f0);
}
.word-text {
    font-family: "Liberation Sans", sans-serif;
    font-size: 22px;
    fill: #fff;
    text-anchor: middle;
}
.github {
    background: linear-gradient(#8a3cb0, #6a2da0);
}
.eclipse > svg {
    width: 88px;
    height: 78px;
    margin: -3px 0 0 -8px;
}
.prompt {
    background: radial-gradient(circle at 50% 30%, #123a58, #040a14 70%);
}
.webex-meet > svg {
    width: 82px;
    height: 84px;
    margin: -3px 0 0 -6px;
}
.thumb-item {
    width: 83px;
    height: 68px;
    margin-top: 8px;
}
.thumb {
    height: 56px;
    background: #fff;
    border-top: 7px solid #3a3a3c;
    position: relative;
}
.thumb-bar {
    width: 20px;
    height: 3px;
    margin: 4px 2px;
    background: #6a93d8;
}
.thumb-note {
    width: 16px;
    height: 3px;
    margin: 17px 0 0 46px;
    background: #8fb1e2;
}
.thumb-btn {
    position: absolute;
    left: 1px;
    bottom: 0;
    width: 22px;
    height: 4px;
    background: #2f74d0;
}
.thumb-app {
    position: absolute;
    left: 56px;
    top: 41px;
    width: 27px;
    height: 27px;
    border-radius: 6px;
    background: #6f2ea8;
}
.trash-item {
    width: 63px;
    height: 82px;
    margin-top: -8px;
    margin-right: 0;
}
.trash-item svg {
    display: block;
    width: 63px;
    height: 82px;
}
```
